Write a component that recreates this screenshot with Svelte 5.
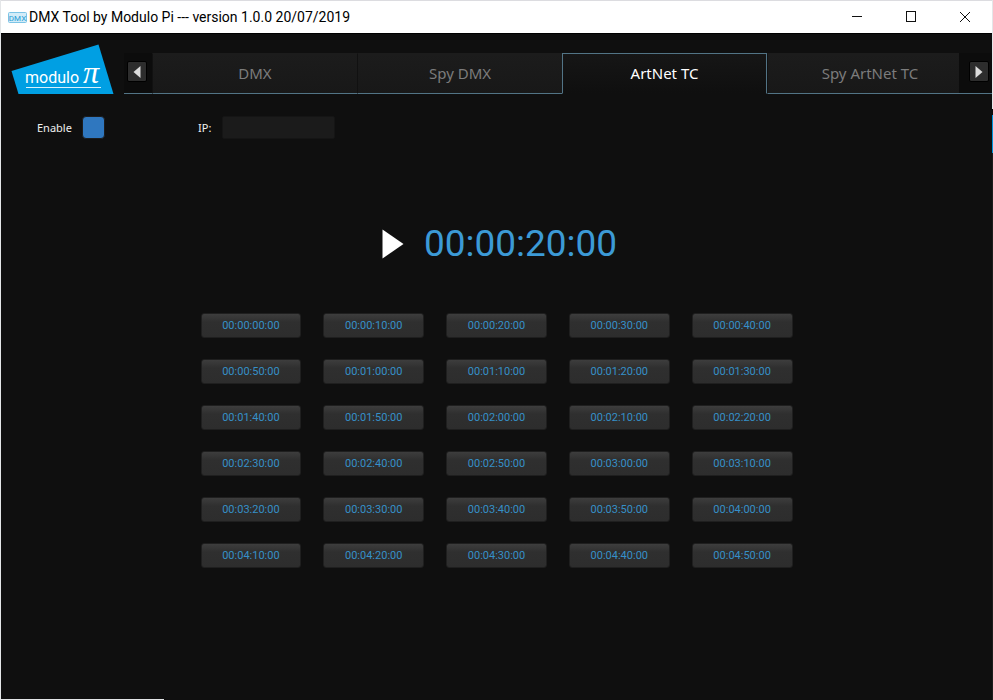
<script lang="ts">
	const tabs = ['DMX', 'Spy DMX', 'ArtNet TC', 'Spy ArtNet TC'];
	const STEP = 10;

	let activeTab = $state('ArtNet TC');
	let enabled = $state(true);
	let ip = $state('');
	let current = $state(20);

	// one preset every ten seconds, up to 00:04:50:00
	const presets = Array.from({ length: 30 }, (_, i) => i * STEP);

	function pad(n: number) {
		return String(n).padStart(2, '0');
	}

	function timecode(seconds: number) {
		const h = Math.floor(seconds / 3600);
		const m = Math.floor(seconds / 60) % 60;
		return `${pad(h)}:${pad(m)}:${pad(seconds % 60)}:00`;
	}

	function shiftTab(delta: number) {
		const next = tabs.indexOf(activeTab) + delta;
		if (next >= 0 && next < tabs.length) activeTab = tabs[next];
	}
</script>

<div class="window">
	<header class="titlebar">
		<svg class="app-icon" width="19" height="11" viewBox="0 0 19 11" aria-hidden="true">
			<rect x="0.5" y="0.5" width="18" height="10" rx="1" fill="#d3ecf8" stroke="#7cc4e6" />
			<text x="9.5" y="8.5" text-anchor="middle">DMX</text>
		</svg>
		<h1>DMX Tool by Modulo Pi --- version 1.0.0 20/07/2019</h1>
		<div class="window-buttons">
			<button aria-label="Minimize">
				<svg width="12" height="12" viewBox="0 0 12 12"><path d="M1 5.500h10" /></svg>
			</button>
			<button aria-label="Maximize">
				<svg width="12" height="12" viewBox="0 0 12 12"><rect x="1.5" y="0.5" width="9" height="10" /></svg>
			</button>
			<button aria-label="Close">
				<svg width="12" height="12" viewBox="0 0 12 12"><path d="M1 1l10 10M11 1L1 11" /></svg>
			</button>
		</div>
	</header>

	<main>
		<div class="top">
			<svg class="logo" width="103" height="50" viewBox="0 0 103 50" role="img" aria-label="modulo pi">
				<path d="M0.500 27L87.500 0.500L102.500 50H7.500Z" fill="#009fe3" />
				<text class="logo-name" x="14" y="39">modulo</text>
				<text class="logo-pi" x="72" y="39">π</text>
				<path d="M15 43.500H90" stroke="#d8f1fc" />
			</svg>

			<nav class="tabbar">
				<div class="scroll">
					<button class="arrow" aria-label="Previous tab" onclick={() => shiftTab(-1)}>
						<svg width="8" height="12" viewBox="0 0 8 12"><path d="M7.500 0V12L0.500 6Z" /></svg>
					</button>
				</div>
				<div class="tabs" role="tablist">
					{#each tabs as tab}
						<button
							class="tab"
							class:active={tab === activeTab}
							role="tab"
							aria-selected={tab === activeTab}
							onclick={() => (activeTab = tab)}
						>
							{tab}
						</button>
					{/each}
				</div>
				<div class="scroll right">
					<button class="arrow" aria-label="Next tab" onclick={() => shiftTab(1)}>
						<svg width="8" height="12" viewBox="0 0 8 12"><path d="M0.500 0V12L7.500 6Z" /></svg>
					</button>
				</div>
			</nav>
		</div>

		<div class="settings">
			<label class="enable">
				Enable
				<input type="checkbox" bind:checked={enabled} />
			</label>
			<label class="ip">
				IP:
				<input type="text" bind:value={ip} />
			</label>
		</div>

		<div class="clock">
			<button class="play" aria-label="Play">
				<svg width="22" height="30" viewBox="0 0 22 30"><path d="M0.500 0.500V29.500L21.500 15Z" /></svg>
			</button>
			<output>{timecode(current)}</output>
		</div>

		<div class="presets">
			{#each presets as seconds}
				<button onclick={() => (current = seconds)}>{timecode(seconds)}</button>
			{/each}
		</div>
	</main>
</div>

<style>
:global(body) {
	margin: 0;
	background: #0f0f0f;
}

button {
	padding: 0;
	border: none;
	background: none;
	font: inherit;
	color: inherit;
}

svg {
	display: block;
}

.window {
	box-sizing: border-box;
	min-height: 100vh;
	display: flex;
	flex-direction: column;
	padding-right: 1px;
	border-left: 1px solid #e4e6e8;
	background:
		linear-gradient(#e4e6e8 109px, #0f0f0f 109px 115px, #0095dc 115px 153px, #1c1c1c 153px) right / 1px 100% no-repeat,
		linear-gradient(#e4e6e8, #e4e6e8) left bottom / 163px 1px no-repeat,
		#0f0f0f;
	color: #f0f0f0;
	font-family: "Noto Sans", "Open Sans", sans-serif;
}

/* Title bar */
.titlebar {
	box-sizing: border-box;
	height: 33px;
	display: flex;
	align-items: center;
	padding-left: 7px;
	border-top: 1px solid #dcdce0;
	background: #fff;
	color: #000;
}

.app-icon text {
	font: 400 8px Roboto, sans-serif;
	fill: #1f9bd4;
}

h1 {
	flex: 1;
	margin: 0 0 0 2px;
	font: 400 14px/20px Roboto, sans-serif;
	white-space: nowrap;
}

.window-buttons {
	display: flex;
}

.window-buttons button {
	width: 54px;
	height: 32px;
	display: grid;
	place-items: center;
}

.window-buttons svg {
	fill: none;
	stroke: #111;
}

/* Logo and tabs */
main {
	flex: 1;
	border-top: 1px solid #000;
}

.top {
	display: flex;
	align-items: flex-start;
	padding: 10px 0 0 10px;
}

.logo {
	flex-shrink: 0;
}

.logo-name {
	font: 400 16px Roboto, sans-serif;
	fill: #fff;
}

.logo-pi {
	font: italic 400 32px "Liberation Serif", serif;
	fill: #fff;
}

.tabbar {
	flex: 1;
	min-width: 0;
	display: flex;
	margin: 9px 0 0 10px;
}

.scroll {
	box-sizing: border-box;
	width: 28px;
	height: 41px;
	flex-shrink: 0;
	display: flex;
	padding: 8px 0 0 3px;
	border-bottom: 1px solid #527486;
	background: #0c0c0c;
}

.scroll.right {
	width: 33px;
	padding-left: 10px;
}

.arrow {
	box-sizing: border-box;
	width: 20px;
	height: 21px;
	display: grid;
	place-items: center;
	border: 1px solid #000;
	border-radius: 2px;
	background: #2d2d2d;
}

.arrow path {
	fill: #dcdcdc;
}

.tabs {
	flex: 1;
	min-width: 0;
	display: flex;
	overflow: hidden;
}

.tab {
	box-sizing: border-box;
	flex: 1 0 205px;
	height: 41px;
	padding-bottom: 2px;
	border: 1px solid #111;
	border-width: 1px 0 1px 1px;
	border-top-color: #1c1c1c;
	border-bottom-color: #527486;
	background: linear-gradient(#1c1c1c, #181818);
	color: #7c7c7c;
	font-size: 15px;
	line-height: 20px;
}

.tab.active {
	border: 1px solid #527486;
	border-bottom-color: #0f0f0f;
	background: linear-gradient(#161616, #0f0f0f);
	color: #fff;
}

/* Enable and IP */
.settings {
	display: flex;
	margin-top: 22px;
	padding-left: 36px;
	font-size: 11px;
	line-height: 23px;
}

.settings label {
	display: flex;
	align-items: center;
}

.enable {
	width: 161px;
	gap: 10px;
}

.ip {
	gap: 11px;
}

input {
	box-sizing: border-box;
	height: 23px;
	margin: 0;
	border: 1px solid #151515;
	border-radius: 2px;
	background: #1b1b1b;
	color: #f0f0f0;
	font: inherit;
}

input[type='text'] {
	width: 113px;
}

input[type='checkbox'] {
	appearance: none;
	width: 23px;
	background: #111;
	border-color: #1c1c1c;
}

input[type='checkbox']:checked {
	border-radius: 4px;
	background: #2f77bf;
}

/* Current timecode */
.clock {
	display: flex;
	justify-content: center;
	align-items: center;
	gap: 20px;
	margin-top: 86px;
	padding-left: 6px;
}

.play path {
	fill: #fff;
}

output {
	color: #3c9ad6;
	font: 400 37px/38px Roboto, sans-serif;
}

/* Preset grid */
.presets {
	box-sizing: border-box;
	max-width: 592px;
	display: grid;
	grid-template-columns: repeat(5, 1fr);
	gap: 21px 22px;
	margin: 50px auto 0;
}

.presets button {
	box-sizing: border-box;
	height: 25px;
	border: 1px solid #1f1f1f;
	border-radius: 3px;
	background: linear-gradient(#3d3d3d, #2f2f2f 35%, #2d2d2d);
	color: #3690c8;
	font: 400 11px/20px Roboto, sans-serif;
}
</style>
